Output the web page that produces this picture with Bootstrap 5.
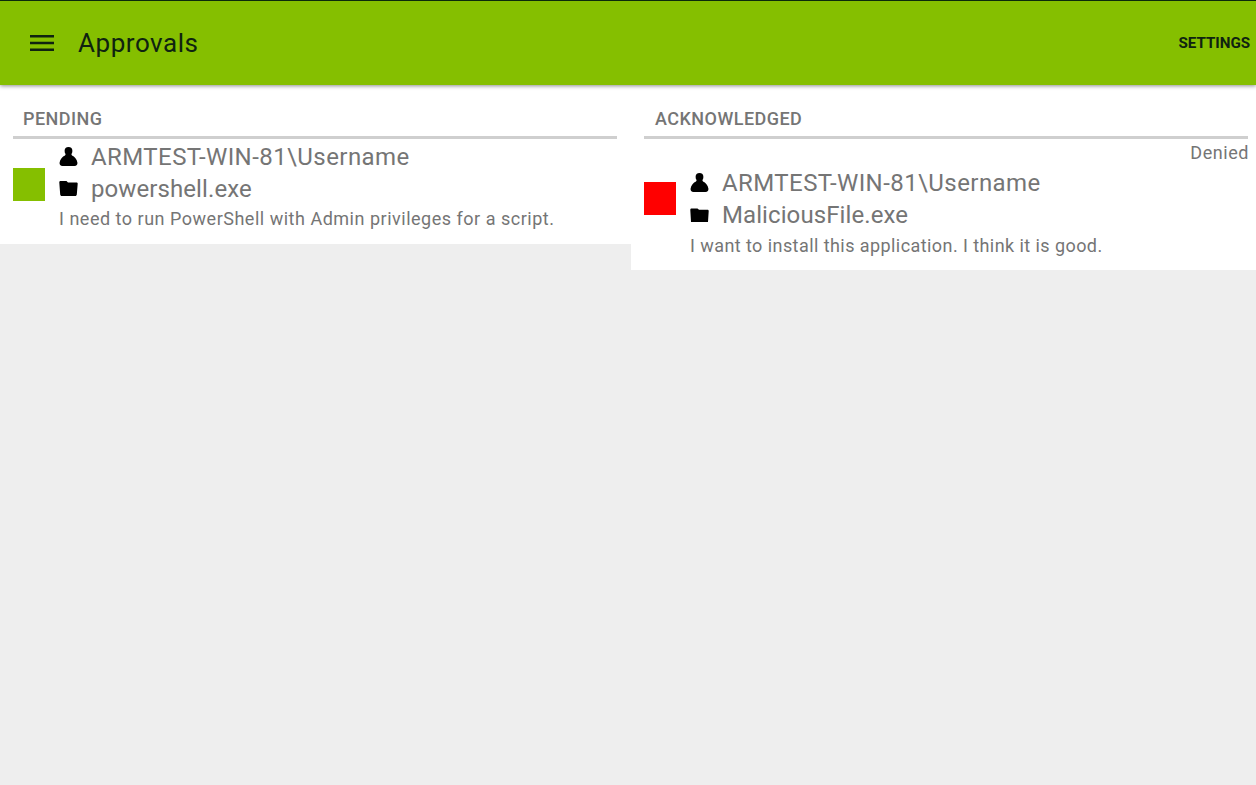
<!DOCTYPE html>
<html lang="en">
<head>
<meta charset="utf-8">
<title>Approvals</title>
<link rel="stylesheet" href="https://cdn.jsdelivr.net/npm/bootstrap@5.3.0/dist/css/bootstrap.min.css">
<style>
html,body{height:100%;}
body{background:#eee;font-family:Roboto,"Liberation Sans",sans-serif;color:#757575;overflow:hidden;}
.appbar{height:85px;background:#85bf00;border-top:1px solid #0b2a0b;box-shadow:0 1px 4px rgba(0,0,0,.45);position:relative;z-index:2;color:#0f2310;}
.burger{margin-left:30px;width:24px;height:16px;margin-top:-1px;}
.apptitle{font-size:26px;margin-left:24px;letter-spacing:.55px;line-height:1;margin-top:-1px;}
.settings{font-size:15.2px;font-weight:700;margin-right:6px;letter-spacing:-.05px;}
.colpend{width:631px;height:160px;background:#fff;padding:0 14px 0 13px;margin-top:-1px;}
.colack{width:625px;height:186px;background:#fff;padding:0 8px 0 13px;margin-top:-1px;}
.sechead{height:55px;border-bottom:3px solid #cfcfcf;padding:25px 0 0 10px;font-size:18px;font-weight:500;color:#757575;line-height:20px;letter-spacing:.46px;}
.colack .sechead{padding-left:11px;}
.itemrow{margin-top:2px;}
.swatch{width:32px;height:33px;flex:none;}
.swgreen{background:#85bf00;margin-top:27px;}
.swred{background:#f00;margin-top:15px;}
.itemtext{margin-left:14px;min-width:0;}
.dataline{height:32px;font-size:24px;line-height:32px;color:#757575;white-space:nowrap;}
.dataline svg{width:19px;height:20px;margin-right:13px;flex:none;}
.userline{letter-spacing:.43px;}
.fileline{letter-spacing:.09px;}
.reason{font-size:18px;line-height:28px;white-space:nowrap;}
.reasonpend{letter-spacing:.51px;}
.reasonack{letter-spacing:.43px;padding-top:1px;}
.deniedtxt{font-size:18px;line-height:24px;letter-spacing:.55px;text-align:right;padding-top:2px;margin-right:-1px;}
</style>
</head>
<body>
<header class="appbar d-flex align-items-center justify-content-between">
  <div class="d-flex align-items-center">
    <svg class="burger" viewBox="0 0 24 16" aria-hidden="true"><path fill="#0f2310" d="M0 0h24v2.600H0zM0 6.700h24v2.600H0zM0 13.400h24V16H0z"/></svg>
    <div class="apptitle">Approvals</div>
  </div>
  <div class="settings">SETTINGS</div>
</header>
<main class="d-flex align-items-start">
  <section class="colpend">
    <div class="sechead">PENDING</div>
    <div class="itemrow d-flex align-items-start">
      <div class="swatch swgreen"></div>
      <div class="itemtext">
        <div class="dataline userline d-flex align-items-center">
          <svg viewBox="0 0 19 20" aria-hidden="true"><circle cx="9.500" cy="3.900" r="3.900"/><path d="M7 6.500L6 8.500C3.500 9.500 1 12.500.6 15.500.3 17.500 1.500 19 3.500 19h12c2 0 3.200-1.500 2.900-3.500C18 12.500 15.500 9.500 13 8.500l-1-2z"/></svg>
          <span>ARMTEST-WIN-81\Username</span>
        </div>
        <div class="dataline fileline d-flex align-items-center">
          <svg viewBox="0 0 19 20" aria-hidden="true"><path d="M1.500 2h6L9 3.500h8.500c.8 0 1.300.6 1.200 1.300L17.800 15.500c-.1.900-.7 1.500-1.500 1.500H2.700c-.8 0-1.400-.6-1.500-1.500L.3 3.500C.2 2.700.7 2 1.500 2z"/></svg>
          <span>powershell.exe</span>
        </div>
        <div class="reason reasonpend">I need to run PowerShell with Admin privileges for a script.</div>
      </div>
    </div>
  </section>
  <section class="colack">
    <div class="sechead">ACKNOWLEDGED</div>
    <div class="deniedtxt">Denied</div>
    <div class="itemrow d-flex align-items-start">
      <div class="swatch swred"></div>
      <div class="itemtext">
        <div class="dataline userline d-flex align-items-center">
          <svg viewBox="0 0 19 20" aria-hidden="true"><circle cx="9.500" cy="3.900" r="3.900"/><path d="M7 6.500L6 8.500C3.500 9.500 1 12.500.6 15.500.3 17.500 1.500 19 3.500 19h12c2 0 3.200-1.500 2.900-3.500C18 12.500 15.500 9.500 13 8.500l-1-2z"/></svg>
          <span>ARMTEST-WIN-81\Username</span>
        </div>
        <div class="dataline fileline d-flex align-items-center">
          <svg viewBox="0 0 19 20" aria-hidden="true"><path d="M1.500 3.500h6L9 4.700h8.500c.8 0 1.300.6 1.200 1.300L18 17H1L.3 5C.2 4.200.7 3.500 1.500 3.500z"/></svg>
          <span>MaliciousFile.exe</span>
        </div>
        <div class="reason reasonack">I want to install this application. I think it is good.</div>
      </div>
    </div>
  </section>
</main>
</body>
</html>
